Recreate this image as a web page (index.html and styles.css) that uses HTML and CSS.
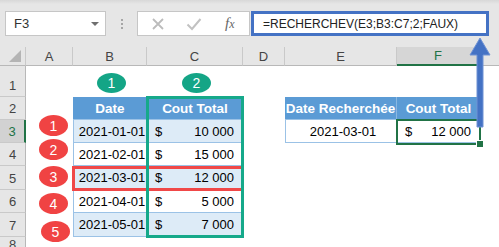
FILE: index.html
```html
<!DOCTYPE html>
<html lang="fr">

<head>
    <meta charset="UTF-8">
    <meta name="viewport" content="width=device-width, initial-scale=1.0">
    <title>RECHERCHEV - Cout Total</title>
    <link rel="stylesheet" href="styles.css">
</head>

<body>
    <div class="page">
        <div class="formula-bar">
            <div class="name-box"><span>F3</span><span class="drop"></span></div>
            <div class="grip"><i></i><i></i><i></i></div>
            <div class="buttons">
                <svg class="btn-icon" width="14" height="14" viewBox="0 0 14 14">
                    <path d="M2 2 L12 12 M12 2 L2 12" stroke="#bcbcbc" stroke-width="1.8" fill="none" />
                </svg>
                <svg class="btn-icon" width="16" height="14" viewBox="0 0 16 14">
                    <path d="M1.5 7.5 L6 12 L14.5 2" stroke="#c2c2c2" stroke-width="2" fill="none" />
                </svg>
                <span class="fx">f<span class="fx-x">x</span></span>
            </div>
            <div class="formula">=RECHERCHEV(E3;B3:C7;2;FAUX)</div>
        </div>

        <div class="sheet">
            <!-- column headers -->
            <div class="corner"><span class="corner-tri"></span></div>
            <div class="ch">A</div>
            <div class="ch">B</div>
            <div class="ch">C</div>
            <div class="ch">D</div>
            <div class="ch">E</div>
            <div class="ch ch-sel">F</div>
            <div class="ch ch-last"></div>

            <!-- row 1 -->
            <div class="rh">1</div>
            <div></div><div></div><div></div><div></div><div></div><div></div><div></div>

            <!-- row 2 -->
            <div class="rh">2</div>
            <div></div>
            <div class="th th-first">Date</div>
            <div class="th th-last">Cout Total</div>
            <div></div>
            <div class="th th-first th-split">Date Recherchée</div>
            <div class="th th-last">Cout Total</div>
            <div></div>

            <!-- row 3 -->
            <div class="rh rh-sel">3</div>
            <div></div>
            <div class="td date band first">2021-01-01</div>
            <div class="td money band last"><span>$</span><span>10 000</span></div>
            <div></div>
            <div class="td date first">2021-03-01</div>
            <div class="td money last"><span>$</span><span>12 000</span></div>
            <div></div>

            <!-- row 4 -->
            <div class="rh">4</div>
            <div></div>
            <div class="td date first">2021-02-01</div>
            <div class="td money last"><span>$</span><span>15 000</span></div>
            <div></div><div></div><div></div><div></div>

            <!-- row 5 -->
            <div class="rh">5</div>
            <div></div>
            <div class="td date band first">2021-03-01</div>
            <div class="td money band last"><span>$</span><span>12 000</span></div>
            <div></div><div></div><div></div><div></div>

            <!-- row 6 -->
            <div class="rh">6</div>
            <div></div>
            <div class="td date first">2021-04-01</div>
            <div class="td money last"><span>$</span><span>5 000</span></div>
            <div></div><div></div><div></div><div></div>

            <!-- row 7 -->
            <div class="rh">7</div>
            <div></div>
            <div class="td date band first">2021-05-01</div>
            <div class="td money band last"><span>$</span><span>7 000</span></div>
            <div></div><div></div><div></div><div></div>

            <!-- row 8 -->
            <div class="rh">8</div>
            <div></div><div></div><div></div><div></div><div></div><div></div><div></div>
        </div>

        <!-- annotations drawn over the sheet -->
        <div class="mark red-box"></div>
        <div class="mark teal-box"></div>
        <div class="mark selection"><span class="handle"></span></div>

        <div class="bubble green b-col-b">1</div>
        <div class="bubble green b-col-c">2</div>
        <div class="bubble red b-r1">1</div>
        <div class="bubble red b-r2">2</div>
        <div class="bubble red b-r3">3</div>
        <div class="bubble red b-r4">4</div>
        <div class="bubble red b-r5">5</div>

        <svg class="arrow" width="24" height="92" viewBox="0 0 24 92">
            <path d="M12 1 L22 18 L15 18 L15 90 L9 90 L9 18 L2 18 Z" fill="#4472c4" stroke="#6f92d4" stroke-width="1" />
        </svg>
    </div>
</body>

</html>
```

FILE: styles.css
```css
body {
    margin: 0;
    font-family: "Liberation Sans", Arial, sans-serif;
    background-color: #fff;
    color: #000;
}

.page {
    position: relative;
    width: 499px;
    height: 247px;
    overflow: hidden;
}

/* formula bar */

.formula-bar {
    display: flex;
    align-items: flex-start;
    box-sizing: border-box;
    height: 47px;
    padding: 11px 0 0 5px;
    background: linear-gradient(#d8d8d8, #e6e6e6 4px);
}

.name-box {
    box-sizing: border-box;
    width: 101px;
    height: 25px;
    display: flex;
    align-items: center;
    justify-content: space-between;
    padding: 0 6px 0 8px;
    background-color: #fff;
    border: 1px solid #c6c6c6;
    font-size: 13px;
    color: #333;
}

.drop {
    width: 0;
    height: 0;
    border-left: 4px solid transparent;
    border-right: 4px solid transparent;
    border-top: 4px solid #6f6f6f;
}

.grip {
    display: flex;
    flex-direction: column;
    gap: 2px;
    margin: 8px 14px 0 15px;
}

.grip i {
    width: 2px;
    height: 2px;
    background-color: #a6a6a6;
}

.buttons {
    box-sizing: border-box;
    width: 113px;
    height: 25px;
    display: flex;
    align-items: center;
    gap: 21px;
    padding-left: 13px;
    background-color: #fff;
    border: 1px solid #c6c6c6;
}

.fx {
    font-family: "Liberation Serif", serif;
    font-style: italic;
    font-size: 15px;
    color: #666;
    margin-left: 2px;
}

.fx-x {
    font-size: 12px;
}

.formula {
    box-sizing: border-box;
    width: 238px;
    height: 25px;
    margin-left: 1px;
    padding-left: 9px;
    display: flex;
    align-items: center;
    background-color: #fff;
    border: 3px solid #4472c4;
    font-size: 12px;
    color: #222;
}

/* sheet grid */

.sheet {
    display: grid;
    grid-template-columns: 26px 47px 74px 96px 42px 112px 83px 1fr;
    grid-template-rows: 19px 31px 23px 23px 23px 24px 23px 24px 1fr;
    height: 200px;
    font-size: 13px;
}

.sheet > div {
    box-sizing: border-box;
}

.corner,
.ch {
    background-color: #e6e6e6;
    border-right: 1px solid #c9c9c9;
    border-bottom: 1px solid #b8b8b8;
}

.corner {
    position: relative;
}

.corner-tri {
    position: absolute;
    right: 4px;
    bottom: 3px;
    width: 0;
    height: 0;
    border-left: 12px solid transparent;
    border-bottom: 12px solid #b4b4b4;
}

.ch {
    display: flex;
    align-items: center;
    justify-content: center;
    color: #444;
}

.ch-sel {
    background-color: #d6d6d6;
    border-bottom: 2px solid #217346;
    color: #217346;
}

.ch-last {
    border-right: none;
}

.rh {
    display: flex;
    align-items: flex-end;
    justify-content: center;
    padding-bottom: 3px;
    background-color: #e6e6e6;
    border-right: 1px solid #b8b8b8;
    border-bottom: 1px solid #c9c9c9;
    color: #444;
}

.rh-sel {
    background-color: #d2d2d2;
    border-right: 2px solid #217346;
    color: #217346;
}

/* tables */

.th {
    display: flex;
    align-items: center;
    justify-content: center;
    background-color: #5b9bd5;
    color: #fff;
    font-weight: bold;
    font-size: 13.5px;
    border-bottom: 1px solid #9bc2e6;
}

.th-split {
    border-right: 1px solid #8bb8e2;
}

.td {
    display: flex;
    align-items: center;
    border-bottom: 1px solid #9bc2e6;
    background-color: #fff;
}

.band {
    background-color: #ddebf7;
}

.first {
    border-left: 1px solid #9bc2e6;
}

.last {
    border-right: 1px solid #9bc2e6;
}

.date {
    justify-content: center;
    padding-left: 3px;
}

.money {
    justify-content: space-between;
    padding: 0 8px 0 8px;
}

/* annotations */

.mark {
    position: absolute;
    box-sizing: border-box;
}

.red-box {
    left: 72px;
    top: 166px;
    width: 172px;
    height: 25px;
    border: 3px solid #f04848;
}

.teal-box {
    left: 146px;
    top: 96px;
    width: 98px;
    height: 142px;
    border: 3px solid #16a98a;
}

.selection {
    left: 396px;
    top: 119px;
    width: 85px;
    height: 26px;
    border: 2px solid #217346;
}

.handle {
    position: absolute;
    right: -5px;
    bottom: -5px;
    width: 6px;
    height: 6px;
    background-color: #217346;
    border: 1px solid #fff;
}

.bubble {
    position: absolute;
    width: 29px;
    height: 20px;
    border-radius: 50%;
    display: flex;
    align-items: center;
    justify-content: center;
    color: #fff;
    font-size: 14px;
}

.green {
    background-color: #14a586;
    top: 73px;
}

.red {
    background-color: #f04343;
    left: 39px;
    height: 21px;
}

.b-col-b {
    left: 97px;
}

.b-col-c {
    left: 182px;
}

.b-r1 {
    top: 115px;
}

.b-r2 {
    top: 139px;
}

.b-r3 {
    top: 166px;
}

.b-r4 {
    top: 193px;
}

.b-r5 {
    top: 221px;
    left: 41px;
}

.arrow {
    position: absolute;
    left: 468px;
    top: 37px;
}
```
